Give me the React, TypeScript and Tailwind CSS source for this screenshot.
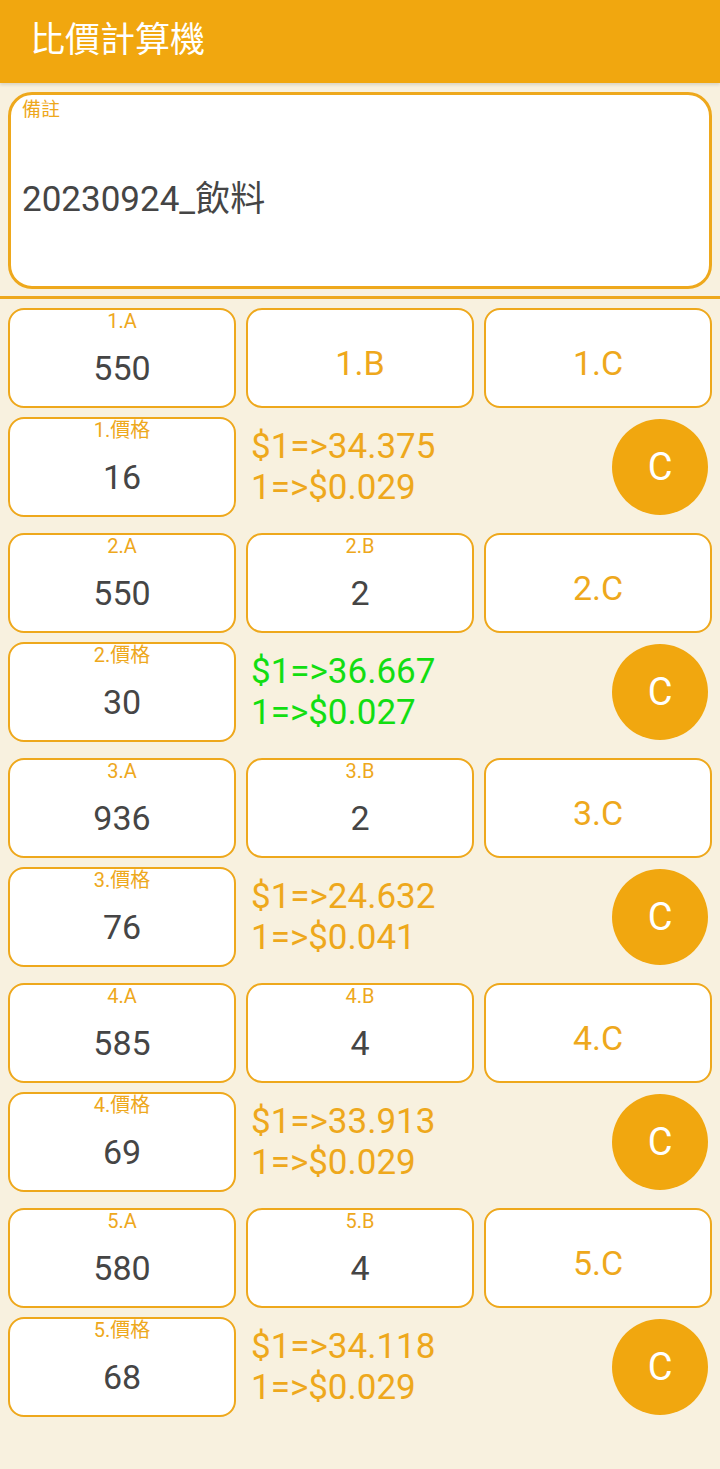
import * as React from 'react'

const groups = [
  { a: '550', b: '', price: '16', r1: '$1=>34.375', r2: '1=>$0.029', best: false },
  { a: '550', b: '2', price: '30', r1: '$1=>36.667', r2: '1=>$0.027', best: true },
  { a: '936', b: '2', price: '76', r1: '$1=>24.632', r2: '1=>$0.041', best: false },
  { a: '585', b: '4', price: '69', r1: '$1=>33.913', r2: '1=>$0.029', best: false },
  { a: '580', b: '4', price: '68', r1: '$1=>34.118', r2: '1=>$0.029', best: false },
]

const font = { fontFamily: 'Roboto, "Noto Sans CJK TC", sans-serif' }

function Field({ label, value }: { label: string; value: string }) {
  return (
    <div className="relative h-[100px] rounded-[16px] border-2 border-[#EEA81C] bg-white">
      {value ? (
        <>
          <div className="absolute inset-x-0 top-0 text-center text-[20px] leading-[22px] text-[#EEA81C]">{label}</div>
          <div className="flex h-full items-center justify-center pt-[20px] text-[34px] text-[#454545]">{value}</div>
        </>
      ) : (
        <div className="flex h-full items-center justify-center pt-[10px] text-[34px] text-[#EEA81C]">{label}</div>
      )}
    </div>
  )
}

export default function App() {
  return (
    <div className="min-h-[1469px] bg-[#F8F1DF]" style={font}>
      {/* Top bar */}
      <div className="flex h-[83px] items-center bg-[#F1A70F] pl-[30px] text-[35px] text-white shadow-[0_2px_3px_rgba(0,0,0,0.12)]">
        比價計算機
      </div>

      {/* Memo */}
      <div className="px-2 pt-[9px]">
        <div className="h-[197px] rounded-[24px] border-[3px] border-[#EEA81C] bg-white pl-[11px]">
          <div className="pt-[3px] text-[19px] leading-[24px] text-[#EEA81C]">備註</div>
          <div className="pt-[58px] text-[35px] leading-[40px] text-[#454545]">20230924_飲料</div>
        </div>
      </div>
      <div className="mt-[7px] h-[3px] bg-[#EEA81C]" />

      {/* Groups */}
      <div className="flex flex-col gap-[16px] px-2 pt-[9px]">
        {groups.map((g, i) => {
          const n = i + 1
          return (
            <div key={n} className="flex flex-col gap-[9px]">
              <div className="grid grid-cols-3 gap-[10px]">
                <Field label={`${n}.A`} value={g.a} />
                <Field label={`${n}.B`} value={g.b} />
                <Field label={`${n}.C`} value="" />
              </div>
              <div className="flex h-[100px] items-center">
                <div className="w-[228px]">
                  <Field label={`${n}.價格`} value={g.price} />
                </div>
                <div className={`ml-[15px] flex-1 text-[35px] leading-[41px] ${g.best ? 'text-[#12DE12]' : 'text-[#EEA81C]'}`}>
                  <div>{g.r1}</div>
                  <div>{g.r2}</div>
                </div>
                <div className="mr-[4px] flex h-[96px] w-[96px] items-center justify-center rounded-full bg-[#F1A70F] text-[38px] text-white">
                  C
                </div>
              </div>
            </div>
          )
        })}
      </div>
    </div>
  )
}
